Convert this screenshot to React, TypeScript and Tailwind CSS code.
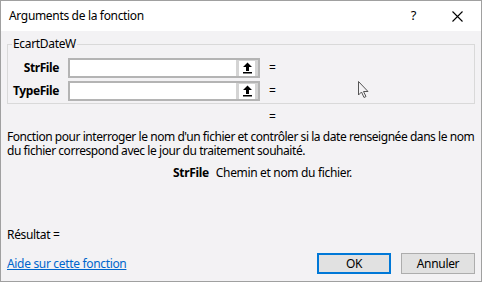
import React from "react";

const font = { fontFamily: '"Noto Sans", "Liberation Sans", sans-serif' };

function RefButton() {
  return (
    <div className="w-[22px] h-full bg-[#d4d4d4] flex items-center justify-center">
      <div className="w-[16px] h-[15px] bg-white flex items-center justify-center">
        <svg width="11" height="12" viewBox="0 0 11 12">
          <path d="M5.5 0.5 L10 5 L7 5 L7 9 L4 9 L4 5 L1 5 Z" fill="#000" />
          <rect x="1" y="10" width="9" height="1.5" fill="#000" />
        </svg>
      </div>
    </div>
  );
}

function ArgRow({ label }: { label: string }) {
  return (
    <div className="flex items-center h-[20px]">
      <div className="w-[51px] text-right font-bold text-[12px] leading-[14px] text-black tracking-[-0.4px]">{label}</div>
      <div className="ml-[9px] flex h-[20px] border-2 border-[#b4b4b4] bg-white">
        <div className="w-[166px] bg-white" />
        <RefButton />
      </div>
      <div className="ml-[9px] text-[12px] leading-[14px] text-black">=</div>
    </div>
  );
}

export default function App() {
  return (
    <div
      className="relative w-[482px] h-[282px] border border-[#a0a0a0] bg-[#f3f2f4] flex flex-col overflow-hidden tracking-[-0.33px]"
      style={font}
    >
      <div className="h-[30px] bg-white flex items-center pl-[8px] pr-[18px] shrink-0">
        <span className="text-[12px] text-black">Arguments de la fonction</span>
        <span className="ml-auto text-[13px] text-black">?</span>
        <svg className="ml-[36px]" width="11" height="11" viewBox="0 0 11 11">
          <path d="M0.5 0.5 L10.5 10.5 M10.5 0.5 L0.5 10.5" stroke="#000" strokeWidth="1.1" />
        </svg>
      </div>

      <div className="flex flex-col px-[6px] text-[12px] leading-[14px] text-black">
        <fieldset className="mt-[5px] border border-[#d9d9d9] px-0 pt-[6px] pb-[2px] flex flex-col gap-[3px] min-w-0">
          <legend className="ml-[4px] px-[1px] text-[12px] leading-[16px]">EcartDateW</legend>
          <ArgRow label="StrFile" />
          <ArgRow label="TypeFile" />
        </fieldset>

        <div className="mt-[6px] pl-[262px]">=</div>

        <div className="mt-[6px] whitespace-nowrap tracking-[-0.45px]">
          <div>Fonction pour interroger le nom d'un fichier et contrôler si la date renseignée dans le nom</div>
          <div>du fichier correspond avec le jour du traitement souhaité.</div>
        </div>

        <div className="mt-[8px] flex pl-[166px]">
          <span className="font-bold">StrFile</span>
          <span className="ml-[7px]">Chemin et nom du fichier.</span>
        </div>

        <div className="mt-[48px]">Résultat =</div>

        <div className="mt-[11px] flex items-center h-[21px]">
          <a className="text-[#0066cc] underline">Aide sur cette fonction</a>
          <div className="ml-auto flex gap-[10px]">
            <div className="w-[74px] h-[21px] border-2 border-[#0078d7] bg-[#e1e1e1] flex items-center justify-center">OK</div>
            <div className="w-[74px] h-[21px] border border-[#adadad] bg-[#e1e1e1] flex items-center justify-center">Annuler</div>
          </div>
        </div>
      </div>

      <svg className="absolute left-[357px] top-[80px]" width="12" height="18" viewBox="0 0 12 18">
        <path d="M0.5 0.5 L0.5 14 L3.5 11 L6 16.5 L8 15.5 L5.5 10.5 L10 10.5 Z" fill="#f3f2f4" stroke="#555" strokeWidth="1" />
      </svg>
    </div>
  );
}
